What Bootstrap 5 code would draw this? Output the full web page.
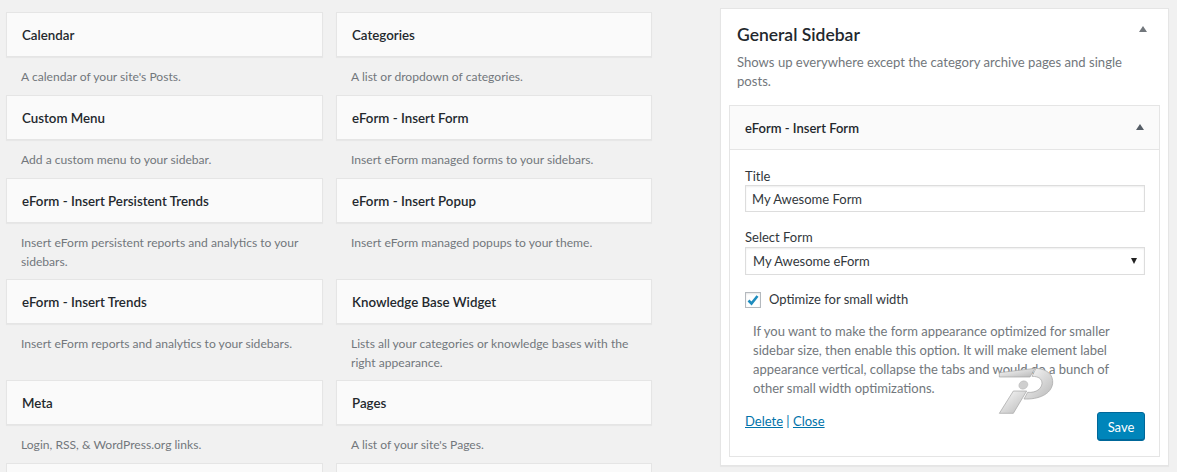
<!DOCTYPE html>
<html>

<head>
  <meta charset="utf-8">
  <meta name="viewport" content="width=device-width">
  <title>Widgets</title>
  <link href="https://cdn.jsdelivr.net/npm/bootstrap@5.3.2/dist/css/bootstrap.min.css" rel="stylesheet" />
  <script src="https://cdn.jsdelivr.net/npm/bootstrap@5.3.2/dist/js/bootstrap.bundle.min.js"></script>
  <style>
    html, body { height: 472px; overflow: hidden; }
    body { background: #f1f1f1; font-family: "Lato", "Noto Sans", sans-serif; font-size: 13px; line-height: 19px; color: #444; position: relative; }
    .page-wrap { padding: 12px 8px 0 6px; gap: 68px; }
    .widget-grid { width: 646px; display: grid; grid-template-columns: 317px 316px; column-gap: 13px; align-items: start; flex: none; }
    .widget-item { min-height: 83px; padding-bottom: 8px; }
    .widget-top { height: 45px; background: #fafafa; border: 1px solid #e5e5e5; box-shadow: 0 1px 1px rgba(0,0,0,.04); padding: 1px 15px 0; font-size: 13.3px; font-weight: 600; color: #23282d; line-height: 43px; }
    .widget-cut { min-height: 0; padding: 0; }
    .widget-cut .widget-top { height: 9px; border-bottom: 0; box-shadow: none; }
    .widget-desc { padding: 10px 15px 0; color: #72777c; font-size: 12.1px; }
    .side-box { width: 449px; height: 458px; margin-top: -4px; background: #fff; border: 1px solid #e5e5e5; box-shadow: 0 1px 1px rgba(0,0,0,.04); padding: 0 8px; }
    .side-head { padding: 13px 8px 0; }
    .side-title { font-size: 17.5px; font-weight: 600; color: #23282d; line-height: 26px; margin: 0; }
    .side-desc { color: #72777c; font-size: 13.1px; margin: 5px 0 14px; }
    .tri { width: 0; height: 0; border-left: 4px solid transparent; border-right: 4px solid transparent; border-bottom: 6px solid #72777c; flex: none; }
    .tri-head { margin: 4px 5px 0 0; }
    .tri-inner { margin: 0 -1px 4px 0; border-bottom-color: #555d66; }
    .inner-widget { border: 1px solid #e5e5e5; height: 352px; }
    .inner-top { height: 44px; background: #fafafa; border-bottom: 1px solid #e5e5e5; padding: 2px 16px 0 15px; font-weight: 600; font-size: 13px; color: #23282d; }
    .inner-body { padding: 17px 14px 0 15px; position: relative; }
    .fld-label { font-size: 13px; color: #32373c; line-height: 19px; display: block; }
    .fld-tight { margin-bottom: -1px; }
    .fld-input { width: 100%; height: 27px; border: 1px solid #ddd; box-shadow: inset 0 1px 2px rgba(0,0,0,.07); padding: 0 6px; font-size: 13px; color: #32373c; background: #fff; font-family: inherit; border-radius: 0; display: block; }
    .fld-select { height: 28px; padding-left: 7px; -webkit-appearance: none; appearance: none; }
    .sel-wrap { position: relative; }
    .sel-caret { position: absolute; right: 8px; top: 11px; width: 0; height: 0; border-left: 3px solid transparent; border-right: 3px solid transparent; border-top: 6px solid #222; }
    .chk-row { margin-top: 15px; }
    .chk-box { width: 16px; height: 16px; border: 1px solid #b4b9be; background: #fff; box-shadow: inset 0 1px 2px rgba(0,0,0,.1); flex: none; display: flex; align-items: center; justify-content: center; }
    .help-text { color: #72777c; font-size: 13px; padding: 0 20px 0 8px; margin: 13px 0 0; }
    .form-foot { margin-top: 10px; }
    .wp-link { color: #0073aa; font-size: 13px; }
    .wp-save { background: #0085ba; border: 1px solid #006799; box-shadow: inset 0 -1px 0 #006799; color: #fff; font-size: 13px; width: 48px; height: 29px; padding: 0; border-radius: 3px; line-height: 26px; }
    .wp-save:hover { background: #008ec2; color: #fff; }
    .mark-logo { position: absolute; left: 980px; top: 355px; }
  </style>
</head>

<body>
  <div class="page-wrap d-flex">
    <div class="widget-grid">
      <div class="widget-item"><div class="widget-top">Calendar</div><div class="widget-desc">A calendar of your site's Posts.</div></div>
      <div class="widget-item"><div class="widget-top">Categories</div><div class="widget-desc">A list or dropdown of categories.</div></div>
      <div class="widget-item"><div class="widget-top">Custom Menu</div><div class="widget-desc">Add a custom menu to your sidebar.</div></div>
      <div class="widget-item"><div class="widget-top">eForm - Insert Form</div><div class="widget-desc">Insert eForm managed forms to your sidebars.</div></div>
      <div class="widget-item"><div class="widget-top">eForm - Insert Persistent Trends</div><div class="widget-desc">Insert eForm persistent reports and analytics to your sidebars.</div></div>
      <div class="widget-item"><div class="widget-top">eForm - Insert Popup</div><div class="widget-desc">Insert eForm managed popups to your theme.</div></div>
      <div class="widget-item"><div class="widget-top">eForm - Insert Trends</div><div class="widget-desc">Insert eForm reports and analytics to your sidebars.</div></div>
      <div class="widget-item"><div class="widget-top">Knowledge Base Widget</div><div class="widget-desc">Lists all your categories or knowledge bases with the right appearance.</div></div>
      <div class="widget-item"><div class="widget-top">Meta</div><div class="widget-desc">Login, RSS, &amp; WordPress.org links.</div></div>
      <div class="widget-item"><div class="widget-top">Pages</div><div class="widget-desc">A list of your site's Pages.</div></div>
      <div class="widget-item widget-cut"><div class="widget-top"></div></div>
      <div class="widget-item widget-cut"><div class="widget-top"></div></div>
    </div>

    <div class="side-box">
      <div class="side-head">
        <div class="d-flex justify-content-between align-items-start">
          <h3 class="side-title">General Sidebar</h3>
          <span class="tri tri-head"></span>
        </div>
        <p class="side-desc">Shows up everywhere except the category archive pages and single posts.</p>
      </div>
      <div class="inner-widget">
        <div class="inner-top d-flex justify-content-between align-items-center">
          <span>eForm - Insert Form</span>
          <span class="tri tri-inner"></span>
        </div>
        <div class="inner-body">
          <label class="fld-label fld-tight">Title</label>
          <input class="fld-input" type="text" value="My Awesome Form">
          <label class="fld-label mt-3">Select Form</label>
          <div class="sel-wrap">
            <select class="fld-input fld-select"><option>My Awesome eForm</option></select>
            <span class="sel-caret"></span>
          </div>
          <div class="d-flex align-items-center gap-2 chk-row">
            <span class="chk-box">
              <svg width="14" height="14" viewBox="0 0 14 14"><path d="M2.5 7.5 5.5 10.5 11.5 3" fill="none" stroke="#1e8cbe" stroke-width="2.6"/></svg>
            </span>
            <span class="fld-label">Optimize for small width</span>
          </div>
          <p class="help-text">If you want to make the form appearance optimized for smaller sidebar size, then enable this option. It will make element label appearance vertical, collapse the tabs and would do a bunch of other small width optimizations.</p>
          <div class="d-flex justify-content-between align-items-start form-foot">
            <span class="wp-link mt-1"><a class="wp-link" href="#">Delete</a> | <a class="wp-link" href="#">Close</a></span>
            <button class="btn wp-save mt-1">Save</button>
          </div>
        </div>
      </div>
    </div>
  </div>

  <svg class="mark-logo" width="90" height="70" viewBox="0 0 270 210">
    <defs>
      <linearGradient id="lg" x1="0" y1="0" x2="1" y2="1">
        <stop offset="0" stop-color="#fcfcfc"/>
        <stop offset="1" stop-color="#b8b8b8"/>
      </linearGradient>
    </defs>
    <path d="M58 53 165 40 150 66H58Z" fill="url(#lg)" stroke="#a0a0a0" stroke-width="2"/>
    <path d="M168 40C205 42 220 62 218 85 214 118 175 134 132 132L143 112C170 114 185 100 186 85 186 72 176 64 156 64Z" fill="url(#lg)" stroke="#a0a0a0" stroke-width="2"/>
    <path d="M100 108H140L100 175H58Z" fill="url(#lg)" stroke="#a0a0a0" stroke-width="2"/>
    <ellipse cx="130" cy="90" rx="14" ry="12" transform="rotate(-30 130 90)" fill="#cfcfcf" stroke="#a0a0a0"/>
  </svg>
</body>

</html>
